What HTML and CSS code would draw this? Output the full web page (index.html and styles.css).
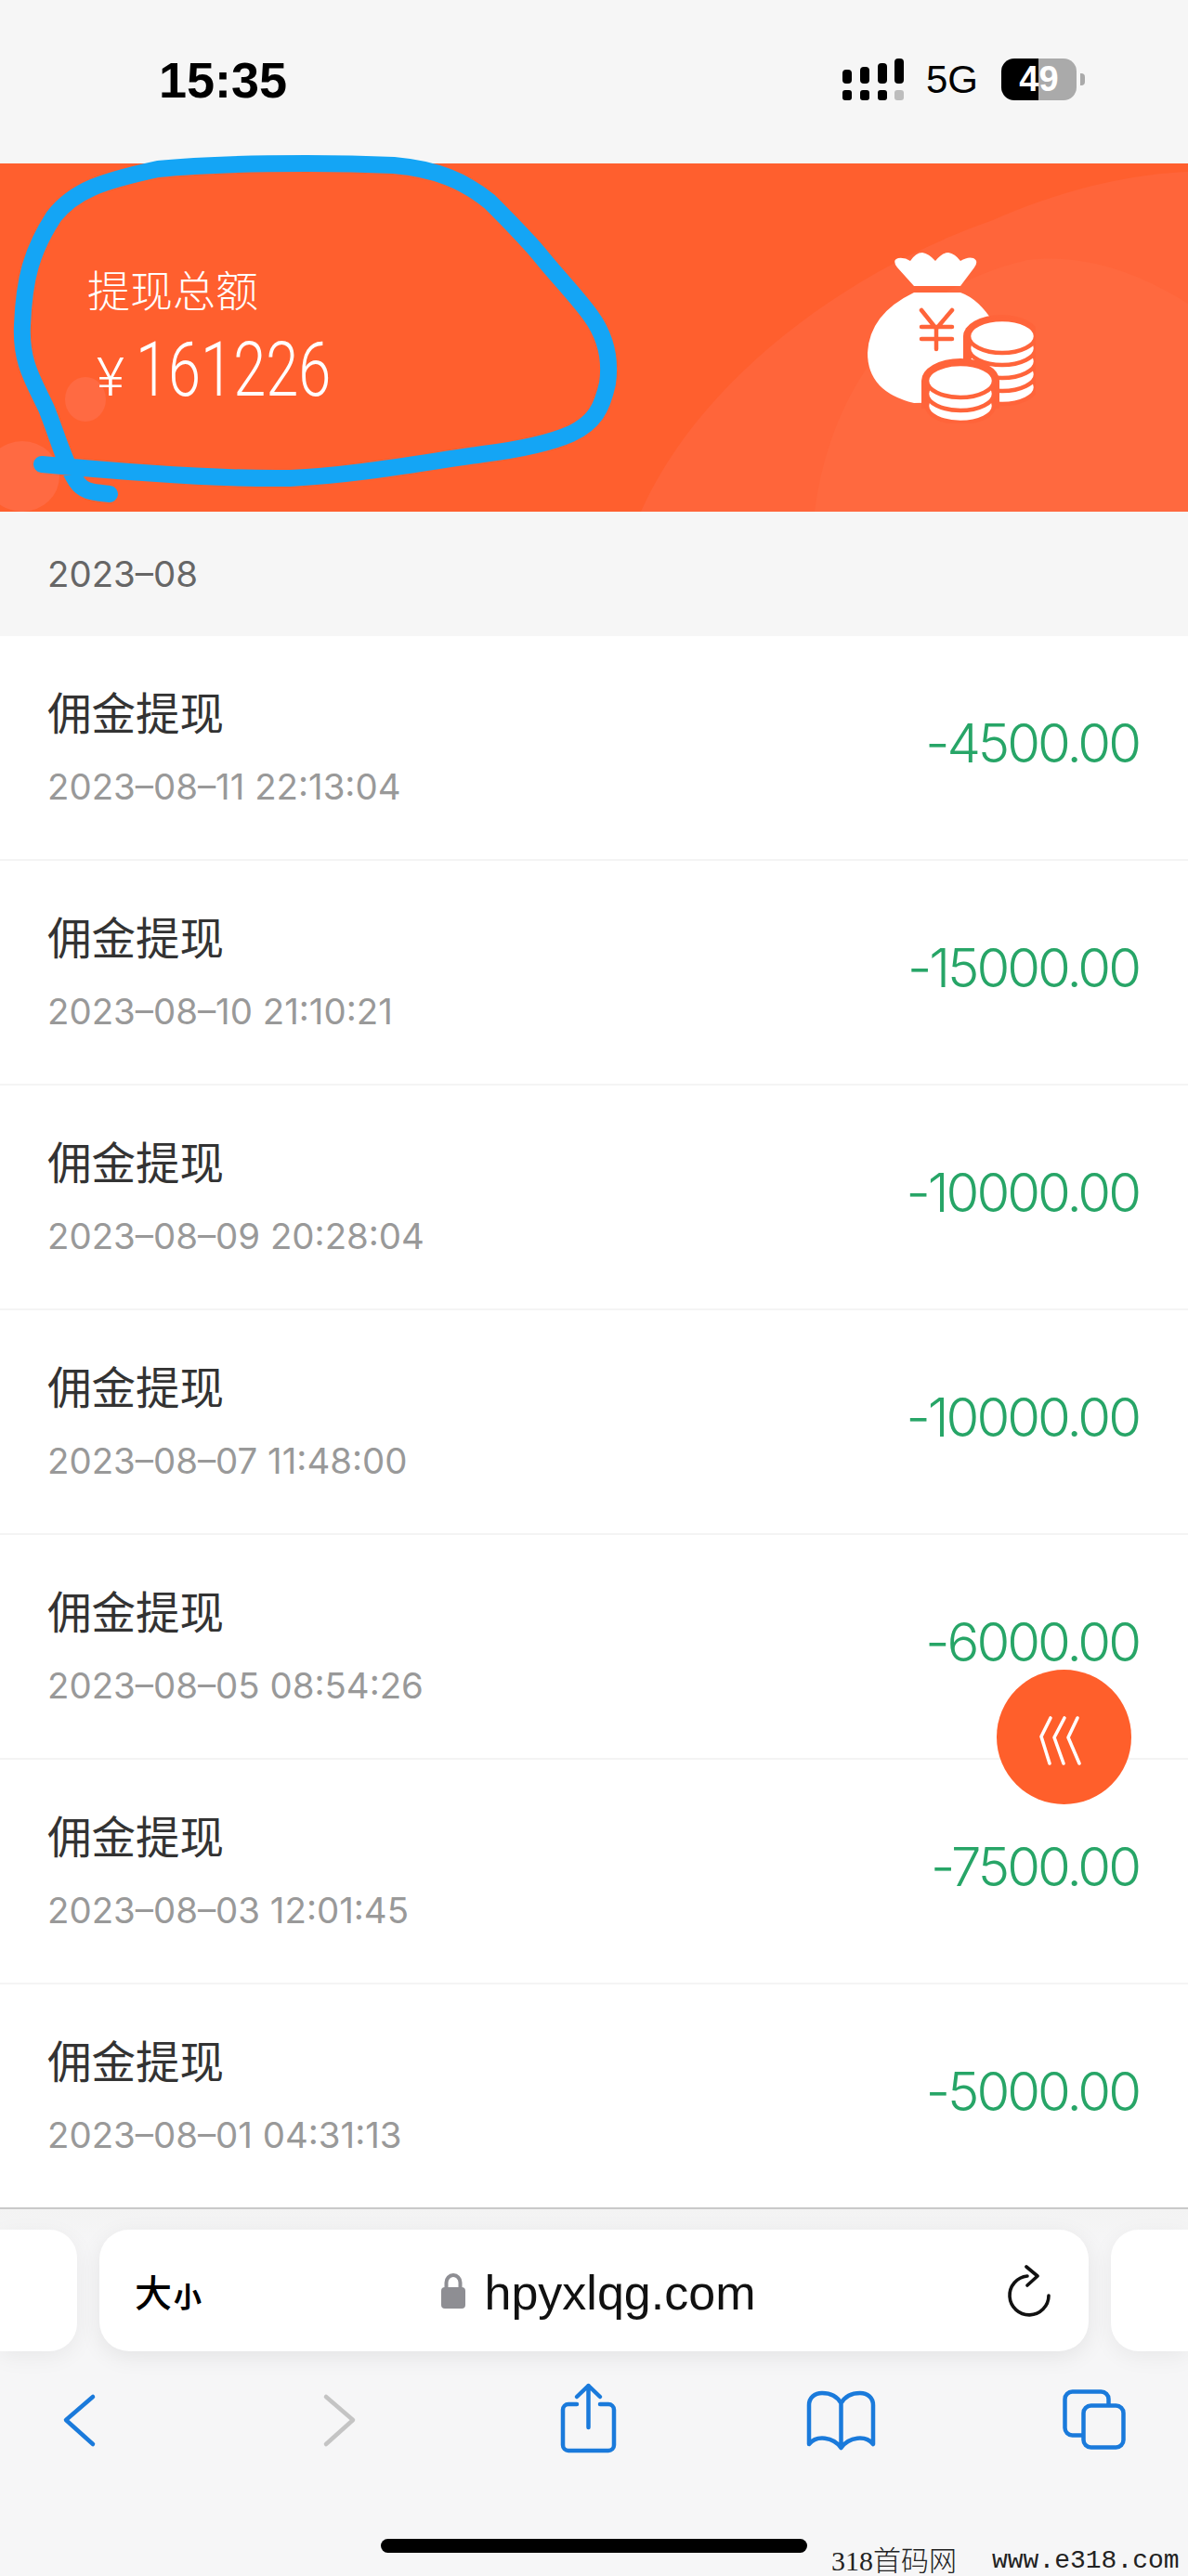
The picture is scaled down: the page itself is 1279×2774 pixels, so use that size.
FILE: index.html
```html
<!DOCTYPE html>
<html lang="zh-CN">
<head>
    <meta charset="UTF-8">
    <title>提现记录</title>
    <link rel="stylesheet" href="styles.css">
</head>
<body>
<div id="page">
    <div class="statusBar">
        <div class="clock">15:35</div>
        <div class="statusRight">
            <svg class="signal" width="66" height="45" viewBox="0 0 66 45">
                <g fill="#000">
                    <rect x="0" y="12" width="10" height="15" rx="4"/>
                    <rect x="19" y="9" width="10" height="18" rx="4"/>
                    <rect x="38" y="5" width="10" height="22" rx="4"/>
                    <rect x="56" y="0" width="10" height="27" rx="4"/>
                    <rect x="0" y="34" width="10" height="11" rx="3"/>
                    <rect x="19" y="34" width="10" height="11" rx="3"/>
                    <rect x="38" y="34" width="10" height="11" rx="3"/>
                </g>
                <rect x="56" y="34" width="10" height="11" rx="3" fill="#bdbdbd"/>
            </svg>
            <div class="network">5G</div>
            <div class="battery">49</div>
            <div class="batteryNub"></div>
        </div>
    </div>

    <div class="banner">
        <svg class="bannerBg" width="1279" height="375" viewBox="0 0 1279 375">
            <path d="M690 375 C750 240 900 120 1069 61 C1140 30 1210 12 1279 9 V375 Z" fill="#ff653a"/>
            <path d="M877 375 C890 270 950 140 1106 104 C1170 96 1230 120 1279 151 V375 Z" fill="#ff693f"/>
            <ellipse cx="92" cy="254" rx="22" ry="24" fill="#ff6a42"/>
            <ellipse cx="24" cy="337" rx="40" ry="38" fill="#ff6a42"/>
        </svg>
        <div class="bannerText">
            <div class="bannerLabel">提现总额</div>
            <div class="bannerAmount"><span class="yen">¥</span><span class="bannerNum">161226</span></div>
        </div>
        <svg class="bagIcon" width="181" height="184" viewBox="0 0 181 184">
            <path d="M50 36 L32 16 Q26 8 33 6 Q40 5 46 9 Q52 0 59 0 Q66 1 73 9 Q80 0 87 0 Q94 1 100 9 Q108 4 114 6 Q120 9 115 16 L100 36 Z" fill="#fff"/>
            <path d="M50 43 H100 Q120 50 136 76 V160 L50 162 Q0 150 0 108 Q2 66 50 43 Z" fill="#fff"/>
            <g fill="none" stroke="#ff643a" stroke-width="4.5" stroke-linecap="round">
                <path d="M58 62 L74 82 L91 62 M74 82 V104 M58 80 H91 M58 93 H91"/>
            </g>
            <ellipse cx="144" cy="90" rx="41" ry="23" fill="#ff643a"/>
            <rect x="103" y="90" width="40" height="75" fill="#ff643a"/>
            <g fill="#fff" stroke="#ff643a" stroke-width="4.5">
                <ellipse cx="145" cy="145" rx="36" ry="18"/>
                <ellipse cx="145" cy="131" rx="36" ry="18"/>
                <ellipse cx="145" cy="117" rx="36" ry="18"/>
                <ellipse cx="145" cy="103" rx="36" ry="18"/>
                <ellipse cx="145" cy="90" rx="36" ry="18"/>
            </g>
            <ellipse cx="100" cy="138" rx="42" ry="24" fill="#ff643a"/>
            <rect x="58" y="138" width="84" height="30" fill="#ff643a"/>
            <g fill="#fff" stroke="#ff643a" stroke-width="4.5">
                <ellipse cx="100" cy="165" rx="36" ry="18"/>
                <ellipse cx="100" cy="152" rx="36" ry="18"/>
                <ellipse cx="100" cy="138" rx="36" ry="18"/>
            </g>
        </svg>
    </div>

    <div class="monthHead">2023–08</div>

    <ul class="recordList">
        <li class="record">
            <div>
                <div class="recordTitle">佣金提现</div>
                <div class="recordTime">2023–08–11 22:13:04</div>
            </div>
            <div class="recordMoney">-4500.00</div>
        </li>
        <li class="record">
            <div>
                <div class="recordTitle">佣金提现</div>
                <div class="recordTime">2023–08–10 21:10:21</div>
            </div>
            <div class="recordMoney">-15000.00</div>
        </li>
        <li class="record">
            <div>
                <div class="recordTitle">佣金提现</div>
                <div class="recordTime">2023–08–09 20:28:04</div>
            </div>
            <div class="recordMoney">-10000.00</div>
        </li>
        <li class="record">
            <div>
                <div class="recordTitle">佣金提现</div>
                <div class="recordTime">2023–08–07 11:48:00</div>
            </div>
            <div class="recordMoney">-10000.00</div>
        </li>
        <li class="record">
            <div>
                <div class="recordTitle">佣金提现</div>
                <div class="recordTime">2023–08–05 08:54:26</div>
            </div>
            <div class="recordMoney">-6000.00</div>
        </li>
        <li class="record">
            <div>
                <div class="recordTitle">佣金提现</div>
                <div class="recordTime">2023–08–03 12:01:45</div>
            </div>
            <div class="recordMoney">-7500.00</div>
        </li>
        <li class="record">
            <div>
                <div class="recordTitle">佣金提现</div>
                <div class="recordTime">2023–08–01 04:31:13</div>
            </div>
            <div class="recordMoney">-5000.00</div>
        </li>
    </ul>

    <div class="browserBar">
        <div class="tabRow">
            <div class="sideTab sideTabLeft"></div>
            <div class="urlBar">
                <div class="fontSize">大<span class="fontSizeSmall">小</span></div>
                <div class="urlCenter">
                    <svg width="28" height="40" viewBox="0 0 28 40">
                        <path d="M6.5 17 V11 a7.5 8 0 0 1 15 0 V17" fill="none" stroke="#8e8e93" stroke-width="4"/>
                        <rect x="1" y="16" width="26" height="23" rx="4" fill="#8e8e93"/>
                    </svg>
                    <span class="urlText">hpyxlqg.com</span>
                </div>
                <svg class="reload" width="50" height="56" viewBox="0 0 50 56">
                    <path d="M22 12 A21 21 0 1 0 45 33" fill="none" stroke="#111" stroke-width="3.6" stroke-linecap="round"/>
                    <path d="M21 2 L33 12 L22 22" fill="none" stroke="#111" stroke-width="3.6" stroke-linecap="round" stroke-linejoin="round"/>
                </svg>
            </div>
            <div class="sideTab sideTabRight"></div>
        </div>
        <div class="navRow">
            <svg width="80" height="80" viewBox="0 0 80 80">
                <path d="M55 17 L26 42 L55 68" class="navStroke"/>
            </svg>
            <svg width="80" height="80" viewBox="0 0 80 80">
                <path d="M33 17 L62 42 L33 68" class="navStroke navOff"/>
            </svg>
            <svg width="80" height="80" viewBox="0 0 80 80">
                <path d="M29 25 H20 a6 6 0 0 0 -6 6 V69 a6 6 0 0 0 6 6 H63 a6 6 0 0 0 6 -6 V31 a6 6 0 0 0 -6 -6 H54" class="navStroke"/>
                <path d="M41.5 50 V5 M29 17 L41.5 5 L54 17" class="navStroke"/>
            </svg>
            <svg width="80" height="80" viewBox="0 0 80 80">
                <path d="M40.5 24 C36 16 28 13 20 13 C12 13 6 18 6 26 V68 C14 58 32 60 40.5 72 C49 60 67 58 75 68 V26 C75 18 69 13 61 13 C53 13 45 16 40.5 24 V72" class="navStroke"/>
            </svg>
            <svg width="80" height="80" viewBox="0 0 80 80">
                <rect x="8.5" y="11.5" width="47" height="47" rx="8" class="navStroke"/>
                <rect x="28.5" y="26.5" width="43" height="45" rx="8" class="navStroke tabFront"/>
            </svg>
        </div>
        <div class="homeBar"></div>
    </div>

    <!-- things that lie over the page -->
    <div class="floatBtn">
        <svg width="145" height="145" viewBox="0 0 145 145">
            <path d="M58 52 L48 72 L57 101 M73 52 L62 73 L72 101 M87 52 L77 73 L89 101" fill="none" stroke="#fff" stroke-width="3.6" stroke-linecap="round" stroke-linejoin="round"/>
        </svg>
    </div>
    <svg class="scribble" width="700" height="560" viewBox="0 0 700 560">
        <path d="M118 532 C100 530 90 530 82 518 C70 500 62 470 50 440 C36 410 22 390 24 350 C26 300 34 270 58 233 C80 205 110 195 170 182 C230 176 340 174 424 178 C470 182 500 195 527 217 C550 240 565 255 580 273 C600 298 620 318 636 340 C652 362 658 385 654 413 C648 440 640 455 615 467 C590 478 560 484 520 489 C450 499 380 512 312 515 C240 516 130 508 45 500" fill="none" stroke="#14a5f5" stroke-width="18" stroke-linecap="round" stroke-linejoin="round"/>
    </svg>
    <div class="watermark"><span class="wmCn">318首码网</span><span class="wmEn">www.e318.com</span></div>
</div>
</body>
</html>
```

FILE: styles.css
```css
* {
    box-sizing: border-box;
}

body {
    margin: 0;
    background: #fff;
    font-family: "Liberation Sans", "Noto Sans CJK SC", sans-serif;
}

#page {
    position: relative;
    width: 1279px;
    height: 2774px;
    overflow: hidden;
}

.statusBar {
    display: flex;
    justify-content: space-between;
    align-items: flex-start;
    height: 176px;
    padding: 63px 111px 0 171px;
    background: #f6f6f6;
    color: #000;
}

.clock {
    font-size: 54px;
    font-weight: bold;
    line-height: 46px;
}

.statusRight {
    display: flex;
    align-items: center;
    height: 45px;
}

.network {
    margin-left: 24px;
    font-size: 42px;
    line-height: 45px;
}

.battery {
    width: 81px;
    height: 45px;
    margin-left: 25px;
    border-radius: 14px;
    background: linear-gradient(90deg, #000 50%, #aaa 50%);
    color: #fff;
    font-size: 38px;
    font-weight: bold;
    line-height: 45px;
    text-align: center;
}

.batteryNub {
    width: 5px;
    height: 13px;
    margin-left: 4px;
    border-radius: 0 4px 4px 0;
    background: #aaa;
}

.banner {
    position: relative;
    display: flex;
    justify-content: space-between;
    align-items: flex-start;
    height: 375px;
    padding: 96px 164px 0 94px;
    background: #ff5f2e;
    color: #fff;
}

.bannerBg {
    position: absolute;
    left: 0;
    top: 0;
}

.bannerText, .bagIcon {
    position: relative;
}

.bannerLabel {
    margin-top: 12px;
    font-size: 46px;
    font-weight: 300;
    line-height: 60px;
}

.bannerAmount {
    display: flex;
    align-items: baseline;
    margin-top: 10px;
    line-height: 90px;
}

.yen {
    width: 52px;
    padding-left: 10px;
    font-size: 58px;
    font-family: "Roboto", sans-serif;
    font-weight: 300;
}

.bannerNum {
    display: inline-block;
    font-family: "Roboto", sans-serif;
    font-size: 81px;
    font-weight: 300;
    transform: scaleX(0.78);
    transform-origin: left;
}

.monthHead {
    height: 134px;
    padding: 0 0 0 51px;
    background: #f6f6f6;
    color: #666;
    font-family: "Inter", sans-serif;
    font-size: 38.4px;
    line-height: 134px;
}

.recordList {
    margin: 0;
    padding: 0;
    list-style-type: none;
}

.record {
    display: flex;
    justify-content: space-between;
    height: 242px;
    padding: 55px 53px 0 51px;
    border-bottom: 2px solid #f4f4f4;
    background: #fff;
}

.recordTitle {
    color: #333;
    font-size: 47.5px;
    line-height: 60px;
}

.recordTime {
    margin-top: 22px;
    color: #999;
    font-family: "Inter", sans-serif;
    font-size: 38.4px;
    line-height: 50px;
}

.recordMoney {
    margin-top: 25px;
    color: #27a567;
    font-family: "Inter", sans-serif;
    font-size: 58px;
    font-weight: 300;
    line-height: 70px;
    letter-spacing: -3px;
}

.browserBar {
    height: 397px;
    margin-top: -2px;
    border-top: 2px solid #c9c9c9;
    padding-top: 22px;
    background: linear-gradient(#f3f3f3, #f6f6f7 40px);
}

.tabRow {
    display: flex;
    gap: 24px;
    height: 131px;
}

.sideTab {
    width: 83px;
    background: #fff;
    box-shadow: 0 6px 24px rgba(0, 0, 0, 0.06);
}

.sideTabLeft {
    border-radius: 0 30px 30px 0;
}

.sideTabRight {
    border-radius: 30px 0 0 30px;
}

.urlBar {
    position: relative;
    display: flex;
    flex: 1;
    justify-content: space-between;
    align-items: center;
    padding: 0 38px 0 38px;
    border-radius: 32px;
    background: #fff;
    box-shadow: 0 6px 24px rgba(0, 0, 0, 0.08);
}

.fontSize {
    color: #000;
    font-size: 40px;
    font-weight: 500;
}

.fontSizeSmall {
    margin-left: 2px;
    font-size: 30px;
    font-weight: bold;
}

.urlCenter {
    display: flex;
    align-items: center;
    gap: 20px;
    margin-left: -14px;
}

.urlText {
    margin-top: 5px;
    color: #111;
    font-size: 52px;
}

.navRow {
    display: flex;
    justify-content: space-between;
    margin-top: 32px;
    padding: 0 61px 0 45px;
}

.navStroke {
    fill: none;
    stroke: #1a7adb;
    stroke-width: 4.5;
    stroke-linecap: round;
    stroke-linejoin: round;
}

.navOff {
    stroke: #c4c4c4;
}

.tabFront {
    fill: #f6f6f7;
}

.homeBar {
    width: 459px;
    height: 15px;
    margin: 90px 0 0 410px;
    border-radius: 8px;
    background: #000;
}

.floatBtn {
    position: absolute;
    left: 1073px;
    top: 1798px;
    width: 145px;
    height: 145px;
    border-radius: 50%;
    background: #ff5f2b;
}

.scribble {
    position: absolute;
    left: 0;
    top: 0;
}

.watermark {
    position: absolute;
    left: 895px;
    top: 2741px;
    display: flex;
    gap: 38px;
    color: #222;
    font-size: 30px;
    line-height: 33px;
    white-space: nowrap;
}

.wmCn {
    font-family: "Liberation Serif", "Noto Sans CJK SC", serif;
    font-weight: 300;
}

.wmEn {
    font-family: "Liberation Mono", monospace;
    font-size: 28px;
}
```
